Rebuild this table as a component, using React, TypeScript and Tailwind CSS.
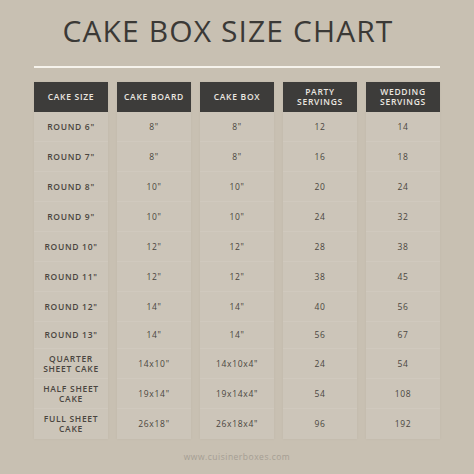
import React from 'react';

const headers = [['CAKE SIZE'], ['CAKE BOARD'], ['CAKE BOX'], ['PARTY', 'SERVINGS'], ['WEDDING', 'SERVINGS']];

const rows: { h: string; cells: string[][] }[] = [
  { h: 'h-[30px]', cells: [['ROUND 6"'], ['8"'], ['8"'], ['12'], ['14']] },
  { h: 'h-[30px]', cells: [['ROUND 7"'], ['8"'], ['8"'], ['16'], ['18']] },
  { h: 'h-[30px]', cells: [['ROUND 8"'], ['10"'], ['10"'], ['20'], ['24']] },
  { h: 'h-[30px]', cells: [['ROUND 9"'], ['10"'], ['10"'], ['24'], ['32']] },
  { h: 'h-[30px]', cells: [['ROUND 10"'], ['12"'], ['12"'], ['28'], ['38']] },
  { h: 'h-[30px]', cells: [['ROUND 11"'], ['12"'], ['12"'], ['38'], ['45']] },
  { h: 'h-[30px]', cells: [['ROUND 12"'], ['14"'], ['14"'], ['40'], ['56']] },
  { h: 'h-[27px]', cells: [['ROUND 13"'], ['14"'], ['14"'], ['56'], ['67']] },
  { h: 'h-[30px]', cells: [['QUARTER', 'SHEET CAKE'], ['14x10"'], ['14x10x4"'], ['24'], ['54']] },
  { h: 'h-[30px]', cells: [['HALF SHEET', 'CAKE'], ['19x14"'], ['19x14x4"'], ['54'], ['108']] },
  { h: 'h-[30px]', cells: [['FULL SHEET', 'CAKE'], ['26x18"'], ['26x18x4"'], ['96'], ['192']] },
];

const App: React.FC = () => {
  return (
    <div className="w-[474px] h-[474px] bg-[#c8c0b2] overflow-hidden font-['Open_Sans',sans-serif]">
      {/* Title */}
      <h1 className="pt-[13px] pr-[18px] text-center text-[30px] leading-[36px] tracking-[1.1px] text-[#3b3936] font-normal">
        CAKE BOX SIZE CHART
      </h1>

      <div className="mx-[34px] mt-[17px] h-[2px] bg-[#f6f3ec]"></div>

      {/* Table */}
      <div className="mx-[34px] mt-[14px] grid grid-cols-5 gap-x-[9px]">
        {headers.map((hd, ci) => (
          <div key={ci} className="flex flex-col bg-[#ccc5b9] shadow-[0_0_3px_rgba(0,0,0,0.04)]">
            <div className="h-[30px] bg-[#3d3c3a] flex flex-col items-center justify-center text-[#ebe7e0] text-[8.5px] leading-[10px] font-semibold tracking-[0.7px]">
              {hd.map((t) => (
                <span key={t}>{t}</span>
              ))}
            </div>
            {rows.map((r, ri) => (
              <div
                key={ri}
                className={`${r.h} flex flex-col items-center justify-center border-b border-[#d0c9be] last:border-b-0 text-[#4a4540] text-[8.5px] leading-[10px] tracking-[0.7px] ${ci === 0 ? 'font-semibold' : 'font-medium'}`}
              >
                {r.cells[ci].map((t) => (
                  <span key={t}>{t}</span>
                ))}
              </div>
            ))}
          </div>
        ))}
      </div>

      <div className="mt-[12px] text-center text-[8.5px] tracking-[0.5px] text-[#a59e92]">
        www.cuisinerboxes.com
      </div>
    </div>
  );
};

export default App;
